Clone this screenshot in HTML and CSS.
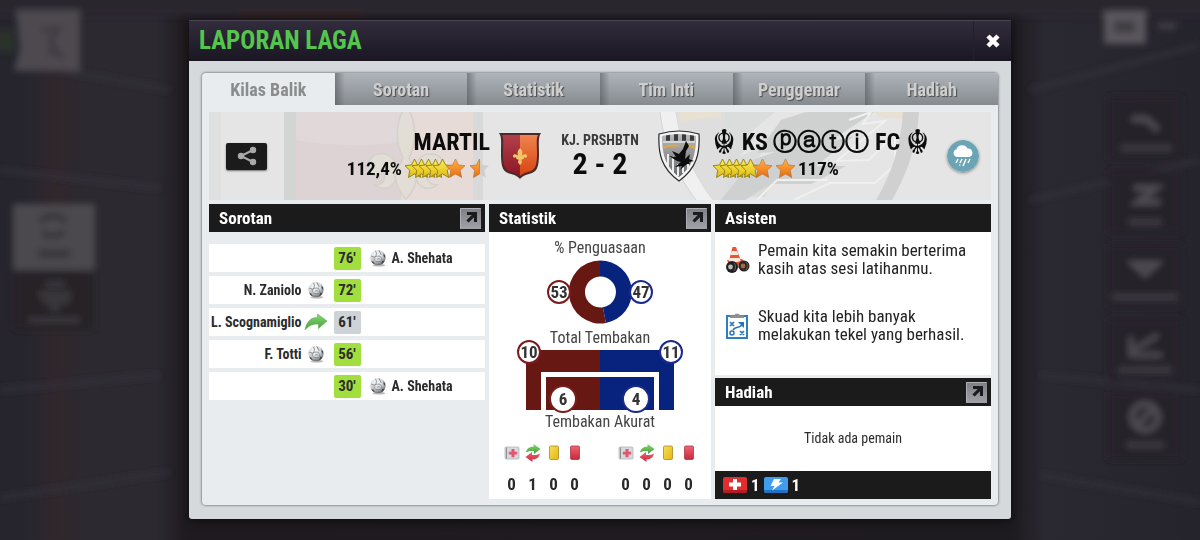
FILE: index.html
```html
<!DOCTYPE html>
<html lang="id">
<head>
  <meta charset="UTF-8" />
  <title>Laporan Laga</title>
  <meta name="viewport" content="width=device-width, initial-scale=1.0" />
  <link rel="stylesheet" href="styles.css">
</head>
<body>
  <!-- Blurred club screen behind the dialog -->
  <svg class="backdrop" viewBox="0 0 1200 540" preserveAspectRatio="none" aria-hidden="true">
    <defs>
      <filter id="soft" x="-20%" y="-20%" width="140%" height="140%"><feGaussianBlur stdDeviation="3"/></filter>
      <linearGradient id="field">
        <stop offset="0" stop-color="#26252e"/><stop offset=".02" stop-color="#26252e"/><stop offset=".045" stop-color="#30272c"/>
        <stop offset=".07" stop-color="#2c2930"/><stop offset=".13" stop-color="#2c2930"/><stop offset=".155" stop-color="#1f1a1f"/>
        <stop offset=".845" stop-color="#1e1b20"/><stop offset=".87" stop-color="#2a2830"/><stop offset="1" stop-color="#25232c"/>
      </linearGradient>
    </defs>
    <rect width="1200" height="540" fill="url(#field)"/>
    <g filter="url(#soft)">
      <rect x="-20" y="-20" width="1240" height="36" fill="#2a272e"/>
      <path d="M240 14h120" stroke="#3a2028" stroke-width="4"/>
      <path d="M60 70 170 90M0 170 160 188M0 390 160 375M0 498 170 472M1030 90 1200 45M1030 200 1200 160M1040 375 1200 390M1040 475 1200 502" stroke="#33303a" stroke-width="4"/>
      <rect x="-4" y="30" width="18" height="22" fill="#29322c"/>
      <path d="M16 10h64v61H14l6-22z" fill="#4d4950"/>
      <path d="M42 30l16-1-8 12 9 14-12-4" stroke="#403c43" stroke-width="6" fill="none"/>
      <rect x="13" y="204" width="82" height="66" fill="#4b484e"/>
      <path d="M40 222c6-8 20-8 26 0M42 232c6 6 17 5 22-1" fill="none" stroke="#38353b" stroke-width="6"/>
      <rect x="38" y="249" width="32" height="9" fill="#3b383d"/>
      <rect x="14" y="272" width="80" height="58" fill="#252228"/>
      <path d="M45 284h20M38 294h34M42 301h28M50 308h10M28 320h52" stroke="#3d3a40" stroke-width="5"/>
      <rect x="1104" y="11" width="42" height="33" fill="#5a575d"/>
      <path d="M1114 21h21v12h-21z" fill="#3f3c43"/>
      <path d="M1158 26h18" stroke="#434048" stroke-width="6"/>
      <g fill="#262329">
        <rect x="1108" y="96" width="74" height="64"/><rect x="1108" y="170" width="74" height="64"/>
        <rect x="1108" y="244" width="74" height="64"/><rect x="1108" y="318" width="74" height="64"/>
        <rect x="1108" y="392" width="74" height="68"/>
      </g>
      <g stroke="#4f4c53" stroke-width="6" fill="none">
        <path d="M1132 119h14l12 11"/>
        <path d="M1134 188h22l-18 14h22"/>
        <path d="M1134 264h22l-11 10z"/>
        <path d="M1131 337v18h31M1134 350l24-15" stroke-width="5"/>
        <circle cx="1145" cy="417" r="13"/><path d="M1138 424l14-14"/>
      </g>
      <path d="M1120 148h52M1128 222h34M1112 297h66M1118 370h54M1126 445h38" stroke="#3b383f" stroke-width="7"/>
    </g>
  </svg>

  <!-- Shared symbols -->
  <svg class="defs" aria-hidden="true">
    <defs>
      <linearGradient id="gYellow" x1="0" y1="0" x2="0" y2="1"><stop offset="0" stop-color="#fff05a"/><stop offset="1" stop-color="#dcb912"/></linearGradient>
      <linearGradient id="gOrange" x1="0" y1="0" x2="0" y2="1"><stop offset="0" stop-color="#ffb54c"/><stop offset="1" stop-color="#e96a0c"/></linearGradient>
      <linearGradient id="gGreen" x1="0" y1="0" x2="0" y2="1"><stop offset="0" stop-color="#8bd676"/><stop offset="1" stop-color="#3f9f37"/></linearGradient>
      <linearGradient id="gRed" x1="0" y1="0" x2="0" y2="1"><stop offset="0" stop-color="#f06472"/><stop offset="1" stop-color="#c8283c"/></linearGradient>
      <linearGradient id="gCardY" x1="0" y1="0" x2="1" y2="1"><stop offset="0" stop-color="#f7df5a"/><stop offset="1" stop-color="#e6b80c"/></linearGradient>
      <radialGradient id="gBall" cx=".4" cy=".3" r=".7"><stop offset="0" stop-color="#fff"/><stop offset=".6" stop-color="#d0d4d7"/><stop offset="1" stop-color="#6a6e72"/></radialGradient>
      <linearGradient id="gBox" x1="0" y1="0" x2="0" y2="1"><stop offset="0" stop-color="#7d7f85"/><stop offset="1" stop-color="#a0a2a8"/></linearGradient>

      <path id="starShape" d="M9.500 0l3 6 6.500.7-4.800 4.600 1.500 7.200-6.200-3.600-6 3.600 1.200-7.200L0 6.700 6.500 6z"/>
      <g id="starY"><use href="#starShape" fill="url(#gYellow)" stroke="#8f7a12" stroke-width=".9"/></g>
      <g id="starO"><use href="#starShape" fill="url(#gOrange)" stroke="#b8743c" stroke-width=".7"/></g>

      <symbol id="open" viewBox="0 0 21 21">
        <rect width="21" height="21" fill="url(#gBox)"/>
        <path d="M.5 20.500V.5h20" fill="none" stroke="#aeb0b5"/>
        <path d="M7 4h10v10h-3V9.200L8.600 14.600 6.400 12.400 11.800 7H7z" fill="#1b1b1d"/>
      </symbol>

      <symbol id="ball" viewBox="0 0 20 20">
        <ellipse cx="11" cy="18" rx="7" ry="1.500" fill="#8a8a8a" opacity=".6"/>
        <circle cx="10" cy="9.500" r="8.500" fill="url(#gBall)"/>
        <path d="M7 2c2 2 1.500 5-.5 7M11 1.500l2.500 5M2.500 8l3.500 1M6 9.500c3-2.500 7-2 8 .8s-2 4.500-5 3.700-4-2.500-3-4.500M9 11.500c1-1.200 3-1 3.500.2" fill="none" stroke="#777b80" stroke-width=".9"/>
        <path d="M14.500 13l2.800.3c-.8 1.700-2 2.900-3.600 3.800zM2.500 13.500l2.300.5 1.500 3C4.500 16.300 3.300 15 2.500 13.500zM16 5l1.700 2 .3 3-1.800-2z" fill="#44484c"/>
      </symbol>

      <symbol id="arrow" viewBox="0 0 24 18">
        <path d="M1 17C3 7 8 4.500 13.500 4.500V1L23 8l-8.500 7.500v-4.300C9 10.500 5 12.500 1 17z" fill="url(#gGreen)" stroke="#5cae50" stroke-width=".6"/>
      </symbol>

      <symbol id="injury" viewBox="0 0 16 16">
        <rect x="1" y="2" width="14" height="12" rx="1" fill="#d7d9dd" stroke="#a9acb2" stroke-width=".7"/>
        <path d="M2.500 2.500v11" stroke="#8b8e94"/>
        <path d="M7.500 4h3v2.700h2.700v2.800h-2.700v2.700h-3V9.500H4.800V6.700h2.700z" fill="#de5870"/>
      </symbol>
      <symbol id="swap" viewBox="0 0 16 18">
        <path d="M1 8.500C2 4 5 2.500 8.500 2.700V0L15.500 5l-6.500 5V7C6 6.800 3.500 7 1 8.500z" fill="url(#gGreen)"/>
        <path d="M15 9.500c-1 4.500-4 6-7.500 5.800V18L.5 13l6.500-5v3c3 .2 5.500 0 8-1.500z" fill="url(#gRed)"/>
      </symbol>
      <symbol id="yellow" viewBox="0 0 16 16"><rect x="3.500" y="1" width="9" height="13.500" rx="1.200" fill="url(#gCardY)" stroke="#a48a2a" stroke-width=".8"/></symbol>
      <symbol id="red" viewBox="0 0 16 16"><rect x="3.500" y="1" width="9" height="13.500" rx="1.200" fill="url(#gRed)" stroke="#a83a48" stroke-width=".8"/></symbol>
    </defs>
  </svg>

  <main class="dialog">
    <header class="dialog-head">
      <h1>LAPORAN LAGA</h1>
      <button class="close" aria-label="Tutup">
        <svg viewBox="0 0 16 16" width="16" height="16"><path d="M3 3l10 10M13 3L3 13" stroke="#fff" stroke-width="4.500"/></svg>
      </button>
    </header>

    <div class="dialog-body">
      <div class="sheet">
        <nav class="tabs" role="tablist">
          <button class="tab active" role="tab" aria-selected="true">Kilas Balik</button>
          <button class="tab" role="tab">Sorotan</button>
          <button class="tab" role="tab">Statistik</button>
          <button class="tab" role="tab">Tim Inti</button>
          <button class="tab" role="tab">Penggemar</button>
          <button class="tab" role="tab">Hadiah</button>
        </nav>

        <div class="content">
          <section class="banner">
            <svg class="watermark" viewBox="0 0 782 88" preserveAspectRatio="xMidYMid slice" aria-hidden="true">
              <rect width="782" height="88" fill="#e5e5e5"/>
              <rect width="12" height="88" fill="#dfe0e0"/>
              <rect x="75" width="14" height="88" fill="#d3d4d4"/>
              <rect x="87" width="105" height="88" fill="#e0d8d9"/>
              <path d="M87 28c35 6 70 7 105 2v58H87z" fill="#ddd3d4"/>
              <rect x="192" width="72" height="88" fill="#e6dbd7"/>
              <rect x="264" width="10" height="88" fill="#d8d9d9"/>
              <g fill="#e2ded6" stroke="#d4d0ca" stroke-width="1.500">
                <path d="M187 52c-8-18-32-10-27 6 3 8 12 6 14 1 5 10-2 14-8 14 8 6 17 4 21-6zM207 52c8-18 32-10 27 6-3 8-12 6-14 1-5 10 2 14 8 14-8 6-17 4-21-6z"/>
                <path d="M197-6c-12 16-10 38-3 52l-8 16c0 8 5 20 11 25 6-5 11-17 11-25l-8-16c7-14 9-36-3-52z"/>
              </g>
              <path d="M451 0c4 36 18 64 36 88h17C486 64 472 36 467 0z" fill="#f0f0f0"/>
              <path d="M451 0c4 36 18 64 36 88M467 0c5 36 19 64 37 88" fill="none" stroke="#d3d3d3"/>
              <path d="M467 0h49v88h-12C486 64 472 36 467 0z" fill="#dedede"/>
              <path d="M470 0h42v5l-41 5zM665 0h30l-2 7-22-2z" fill="#e8e0d2"/>
              <path d="M516 0h50l-30 25 12-2-18 22 26-12-10 22 30-10-20 40h-40z" fill="#dbdcdc"/>
              <path d="M572 8l25-8h68l-45 30 25-6-38 30 30 0-35 18h-40l-26 16h-24l32-40 22-8-18 1z" fill="#cfd0d0"/>
              <path d="M640 8l22-8-8 12 22-3-48 40 32-1 26-26v31l-20 18h-45l-36 17M548 88l20-20 50 0" fill="none" stroke="#f0f0ee" stroke-width="2"/>
              <path d="M694 0h16c-2 34-12 62-27 88h-16c15-25 25-54 27-88z" fill="#d0d0d0"/>
            </svg>

            <div class="side home">
              <button class="share" aria-label="Bagikan">
                <svg viewBox="0 0 20 20" width="20" height="20"><path d="M16 4L4 10l12 6" fill="none" stroke="#a9a9a9" stroke-width="2"/><g fill="#a9a9a9"><circle cx="16" cy="4" r="3.200"/><circle cx="4" cy="10" r="3.200"/><circle cx="16" cy="16" r="3.200"/></g></svg>
              </button>
              <div class="team">
                <h2>MARTIL</h2>
                <p class="rating">112,4%
                  <svg width="86" height="20" viewBox="0 0 86 20">
                    <use href="#starY" x="1" y="1"/><use href="#starY" x="8" y="1"/><use href="#starY" x="15" y="1"/><use href="#starY" x="22" y="1"/><use href="#starY" x="29" y="1"/><use href="#starO" x="42" y="1"/>
                    <g transform="translate(66 1)"><use href="#starShape" fill="#d0cdca"/><path d="M9.500 0v14.900l-6 3.600 1.200-7.200L0 6.700 6.500 6z" fill="url(#gOrange)" stroke="#b8743c" stroke-width=".7"/></g>
                  </svg>
                </p>
              </div>
              <svg class="crest" viewBox="0 0 44 48" width="44" height="48">
                <defs>
                  <linearGradient id="cL" x1="0" y1="0" x2="0" y2="1"><stop offset="0" stop-color="#b2404a"/><stop offset="1" stop-color="#8c1626"/></linearGradient>
                  <linearGradient id="cR" x1="0" y1="0" x2="0" y2="1"><stop offset="0" stop-color="#f08350"/><stop offset="1" stop-color="#d6430e"/></linearGradient>
                </defs>
                <path d="M1 1h42c-3 4-2 11-2 20 0 15-2 19-10 21-5 1-7 3-9 5-2-2-4-4-9-5C5 40 3 36 3 21 3 12 4 5 1 1z" fill="#4c2a2c"/>
                <path d="M4 3h18v41c-2-2-4-3-8-4-7-2-9-5-9-19 0-9 1-14-1-18z" fill="url(#cL)"/>
                <path d="M40 3H22v41c2-2 4-3 8-4 7-2 9-5 9-19 0-9-1-14 1-18z" fill="url(#cR)"/>
                <path d="M22 16c-3 3-3 6-1 9-1-3-6-4-6-1 0 2 2 2 3 1 0 3 2 2 3 3l-1 1c0 2 1 3 2 4 1-1 2-2 2-4l-1-1c1-1 3 0 3-3 1 1 3 1 3-1 0-3-5-2-6 1 2-3 2-6-1-9z" fill="#f1c76a"/>
              </svg>
            </div>

            <div class="score">
              <span class="competition">KJ. PRSHBTN</span>
              <strong>2 - 2</strong>
            </div>

            <div class="side away">
              <svg class="crest" viewBox="0 0 42 52" width="42" height="52">
                <defs><linearGradient id="cA" x1="0" y1="0" x2="0" y2="1"><stop offset="0" stop-color="#b9bbbd"/><stop offset="1" stop-color="#686a6c"/></linearGradient></defs>
                <path d="M21 1c7 0 13 1 20 3 1 19-2 34-20 47C3 38 0 23 1 4c7-2 13-3 20-3z" fill="#f4f4f4" stroke="#2b2b2b" stroke-width="1.200"/>
                <path d="M21 4c6 0 12 1 17 2 0 18-3 30-17 41C7 36 4 24 4 6c5-1 11-2 17-2z" fill="url(#cA)"/>
                <path d="M8 5.500l4-.8v6H8zM16 4.200h4v6.500h-4zM24 4.200l4 .3v6.200h-4zM32 5l4 .7v5h-4z" fill="#3a3b3c"/>
                <path d="M5 12h32" stroke="#fff"/>
                <path d="M5 18c6-3 11-3 15-2M25 15c5 0 8 1 12 3" stroke="#e6a83c" stroke-width="2" fill="none"/>
                <path d="M10 24v12M15 26v16M20 34v12M25 34v9M30 30v9" stroke="#ececec" stroke-width="2"/>
                <path d="M28 11l-3 8-4 5-7-3 4 6-7-1 8 5 4 1-6 5 7-1-2 4 7-6 3 0-1-2 5-1-5-2 1-5-5 5 1-8 3-5z" fill="#0d0d0d"/>
              </svg>
              <div class="team">
                <h2><span class="emblem">☬</span> KS ⓟⓐⓣⓘ FC <span class="emblem">☬</span></h2>
                <p class="rating">
                  <svg width="84" height="20" viewBox="0 0 84 20">
                    <use href="#starY" x="1" y="1"/><use href="#starY" x="8" y="1"/><use href="#starY" x="15" y="1"/><use href="#starY" x="22" y="1"/><use href="#starY" x="29" y="1"/><use href="#starO" x="41" y="1"/><use href="#starO" x="64" y="1"/>
                  </svg>
                  117%</p>
              </div>
              <svg class="weather" viewBox="0 0 32 32" width="32" height="32">
                <circle cx="16" cy="16" r="16" fill="#6ba4b5"/>
                <path d="M10 17a4 4 0 0 1-.5-7.800A6 6 0 0 1 20.500 8.500 4.400 4.400 0 0 1 22.500 17z" fill="#fff"/>
                <path d="M11 19l-2 4M15 19l-2 4M19 19l-3 7M23 19l-2 4M13 24.500l-.5 1" stroke="#fff" stroke-width="1.500"/>
              </svg>
            </div>
          </section>

          <div class="columns">
            <section class="panel">
              <header class="panel-head"><h3>Sorotan</h3><button aria-label="Buka sorotan"><svg width="21" height="21"><use href="#open"/></svg></button></header>
              <ul class="events">
                <li><span></span><time class="goal">76'</time><span class="right"><svg class="ico"><use href="#ball"/></svg>A. Shehata</span></li>
                <li><span class="left">N. Zaniolo<svg class="ico"><use href="#ball"/></svg></span><time class="goal">72'</time><span></span></li>
                <li><span class="left">L. Scognamiglio<svg class="ico"><use href="#arrow"/></svg></span><time>61'</time><span></span></li>
                <li><span class="left">F. Totti<svg class="ico"><use href="#ball"/></svg></span><time class="goal">56'</time><span></span></li>
                <li><span></span><time class="goal">30'</time><span class="right"><svg class="ico"><use href="#ball"/></svg>A. Shehata</span></li>
              </ul>
            </section>

            <section class="panel white">
              <header class="panel-head"><h3>Statistik</h3><button aria-label="Buka statistik"><svg width="21" height="21"><use href="#open"/></svg></button></header>
              <div class="stats">
                <h4>% Penguasaan</h4>
                <svg class="chart" width="110" height="64" viewBox="0 0 110 64">
                  <path d="M55 0.500A31.500 31.500 0 1 0 60.900 63L57.900 47.300A15.500 15.500 0 1 1 55 16.500z" fill="#681812"/>
                  <path d="M55 .5A31.500 31.500 0 0 1 60.900 63L57.900 47.300A15.500 15.500 0 0 0 55 16.500z" fill="#08237e"/>
                  <circle class="home-ring" cx="14" cy="32" r="11"/><text x="14" y="38">53</text>
                  <circle class="away-ring" cx="96" cy="32" r="11"/><text x="96" y="38">47</text>
                </svg>
                <h4>Total Tembakan</h4>
                <svg class="chart goalmouth" width="168" height="76" viewBox="0 0 168 76">
                  <path d="M10 12h74v60H10z" fill="#681812"/><path d="M84 12h74v60H84z" fill="#08237e"/>
                  <path d="M27.500 72V36.500h113V72" fill="none" stroke="#fff" stroke-width="5"/>
                  <circle class="home-ring" cx="13" cy="14" r="11"/><text x="13" y="20">10</text>
                  <circle class="away-ring" cx="155" cy="14" r="11"/><text x="155" y="20">11</text>
                  <circle class="home-ring" cx="47" cy="61" r="13"/><text x="47" y="67">6</text>
                  <circle class="away-ring" cx="120" cy="61" r="13"/><text x="120" y="67">4</text>
                </svg>
                <h4>Tembakan Akurat</h4>
                <div class="cards">
                  <table>
                    <tr><th><svg aria-label="Cedera"><use href="#injury"/></svg></th><th><svg aria-label="Pergantian"><use href="#swap"/></svg></th><th><svg aria-label="Kartu kuning"><use href="#yellow"/></svg></th><th><svg aria-label="Kartu merah"><use href="#red"/></svg></th></tr>
                    <tr><td>0</td><td>1</td><td>0</td><td>0</td></tr>
                  </table>
                  <table>
                    <tr><th><svg aria-label="Cedera"><use href="#injury"/></svg></th><th><svg aria-label="Pergantian"><use href="#swap"/></svg></th><th><svg aria-label="Kartu kuning"><use href="#yellow"/></svg></th><th><svg aria-label="Kartu merah"><use href="#red"/></svg></th></tr>
                    <tr><td>0</td><td>0</td><td>0</td><td>0</td></tr>
                  </table>
                </div>
              </div>
            </section>

            <div class="stack">
              <section class="panel white assistant">
                <header class="panel-head"><h3>Asisten</h3></header>
                <div class="tip">
                  <svg width="26" height="28" viewBox="0 0 26 28">
                    <path d="M3 14l15-1 4 4-16 4z" fill="#e4502c"/>
                    <path d="M8.500 1h3.500l5 14-6 2-6-2z" fill="#e9552f"/>
                    <path d="M7.700 5h5.500l1.300 4H6.500zM5.600 12h10l1 3-6 1.500-6-1.500z" fill="#f6e7e0"/>
                    <path d="M7 21l14-1" stroke="#aaa" stroke-width="3"/>
                    <circle cx="8" cy="21" r="6" fill="#202020"/><circle cx="20" cy="20" r="5.500" fill="#2c2624"/>
                    <circle cx="6.500" cy="21" r="2.400" fill="#b9bcbd"/><circle cx="19" cy="20" r="2.400" fill="#a5664e"/>
                    <path d="M10 17c2 2 2 6 0 8M22 16c2 2 2 5 0 8" stroke="#666" fill="none"/>
                  </svg>
                  <p>Pemain kita semakin berterima kasih atas sesi latihanmu.</p>
                </div>
                <div class="tip">
                  <svg width="26" height="28" viewBox="0 0 26 28">
                    <rect x="3" y="4" width="20" height="22" fill="#fff" stroke="#2d7fc4" stroke-width="2"/>
                    <path d="M6 6V3.500h4C10.500 1 15.500 1 16 3.500h4V6z" fill="#8d8f91"/>
                    <path d="M6 10l4 4M10 10l-4 4M16 19l4 4M20 19l-4 4M9 18c2-4 5-1 9-5" stroke="#2575bd" stroke-width="1.700" fill="none"/>
                    <path d="M14 10h6v6z" fill="#2575bd"/><circle cx="8" cy="21" r="2" fill="none" stroke="#2575bd" stroke-width="1.500"/>
                  </svg>
                  <p>Skuad kita lebih banyak melakukan tekel yang berhasil.</p>
                </div>
              </section>
              <section class="panel white prize">
                <header class="panel-head"><h3>Hadiah</h3><button aria-label="Buka hadiah"><svg width="21" height="21"><use href="#open"/></svg></button></header>
                <p class="empty">Tidak ada pemain</p>
                <footer class="gains">
                  <svg width="24" height="16" viewBox="0 0 24 16"><rect width="24" height="16" rx="2" fill="#e02e30"/><path d="M0 13h24v1.500L22 16H2l-2-1.500z" fill="#b41c22"/><path d="M10 2h4v3.500h4v4h-4V13h-4V9.500H6v-4h4z" fill="#fff"/></svg>
                  <span>1</span>
                  <svg width="24" height="16" viewBox="0 0 24 16"><rect width="24" height="16" rx="2" fill="#3f9df0"/><path d="M0 13h24v1.500L22 16H2l-2-1.500z" fill="#2272c4"/><path d="M10 2h7l-2.500 3.500H19L8 13.500 10.500 9H6.500z" fill="#fff"/></svg>
                  <span>1</span>
                </footer>
              </section>
            </div>
          </div>
        </div>
      </div>
    </div>
  </main>
</body>
</html>
```
FILE: styles.css
```css
* {
  box-sizing: border-box;
}

body {
  font-family: 'Roboto Condensed', 'Liberation Sans', 'DejaVu Sans', sans-serif;
  background: #29262e;
  margin: 0;
  padding: 20px 0;
  min-height: 100vh;
  color: #2b2b2b;
}

h1, h2, h3, h4, p, ul, table {
  margin: 0;
  padding: 0;
}

button {
  font-family: inherit;
  border: none;
  padding: 0;
  background: none;
  cursor: pointer;
}

svg {
  display: block;
  flex: none;
}

.backdrop {
  position: fixed;
  inset: 0;
  width: 100%;
  height: 100%;
  z-index: -1;
}

.defs {
  position: absolute;
  width: 0;
  height: 0;
}

.dialog {
  width: 68.5%;
  margin: 0 auto;
  border-radius: 3px;
  background: #d5d9dc;
  box-shadow: 0 2px 10px rgba(0, 0, 0, 0.6);
}

.dialog-head {
  display: flex;
  justify-content: space-between;
  height: 41px;
  padding-left: 10px;
  border-top: 1px solid #4a4552;
  background: linear-gradient(#322c3c, #1a1622);
}

.dialog-head h1 {
  font-size: 25px;
  line-height: 40px;
  color: #54c64e;
}

.close {
  width: 38px;
  padding-left: 11px;
  border-left: 1px solid #241f2c;
}

.dialog-body {
  padding: 12px 13px 14px;
}

.sheet {
  border-radius: 4px;
  background: #e8ecee;
  box-shadow: 0 0 2px 1px #8f9498;
}

.tabs {
  display: grid;
  grid-template-columns: repeat(6, 1fr);
}

.tab {
  height: 32px;
  font-size: 18px;
  font-weight: bold;
  color: #cfcfcf;
  text-shadow: 1px 1px 1px #4c4c4c;
  background: linear-gradient(to right, rgba(70, 75, 80, 0.5), transparent 10px), linear-gradient(#afb4ba, #868b90);
}

.tab:last-child {
  border-top-right-radius: 4px;
}

.tab.active {
  color: #8b8c8d;
  text-shadow: none;
  background: none;
}

.content {
  padding: 7px 7px 6px;
}

.banner {
  position: relative;
  display: grid;
  grid-template-columns: minmax(0, 1fr) 116px minmax(0, 1fr);
  align-items: center;
  height: 88px;
  margin-bottom: 4px;
  color: #0c0c0c;
}

.watermark {
  position: absolute;
  inset: 0;
  width: 100%;
  height: 100%;
}

.side, .score {
  position: relative;
  display: flex;
  align-items: center;
}

.home {
  gap: 8px;
  padding-left: 17px;
}

.away {
  gap: 12px;
  padding-right: 12px;
}

.share {
  display: grid;
  place-items: center;
  width: 41px;
  height: 27px;
  border-radius: 2px;
  background: #1b1b1b;
  box-shadow: 0 1px 2px rgba(0, 0, 0, 0.5);
}

.home .team {
  margin-left: auto;
  text-align: right;
}

.team h2 {
  font-size: 24px;
  line-height: 28px;
  white-space: nowrap;
}

.emblem {
  font-size: 34px;
  font-weight: normal;
  line-height: 0;
  vertical-align: -4px;
}

.rating {
  display: flex;
  align-items: center;
  gap: 2px;
  padding-bottom: 4px;
  font-size: 19px;
  font-weight: bold;
  line-height: 25px;
}

.weather {
  margin-left: auto;
  border-radius: 50%;
  box-shadow: 0 1px 3px rgba(0, 0, 0, 0.4);
}

.score {
  flex-direction: column;
}

.competition {
  font-size: 14px;
  font-weight: bold;
  line-height: 16px;
  color: #3a3a3a;
}

.score strong {
  font-size: 30px;
  line-height: 32px;
}

.columns {
  display: grid;
  grid-template-columns: 276fr 222fr 276fr;
  gap: 4px;
}

.stack {
  display: flex;
  flex-direction: column;
  gap: 3px;
}

.white {
  background: #fff;
}

.panel-head {
  display: flex;
  align-items: center;
  justify-content: space-between;
  height: 28px;
  padding: 0 4px 0 10px;
  background: #1b1b1b;
}

.panel-head h3 {
  font-size: 17px;
  line-height: 28px;
  color: #fff;
}

.events {
  display: grid;
  gap: 4px;
  padding-top: 12px;
  list-style: none;
}

.events li {
  display: grid;
  grid-template-columns: minmax(0, 1fr) 27px minmax(0, 1fr);
  align-items: center;
  height: 28px;
  background: #fff;
  font-size: 14px;
  font-weight: bold;
  white-space: nowrap;
}

.events time {
  border-radius: 2px;
  background: #cdd3d6;
  font-size: 15px;
  line-height: 23px;
  text-align: center;
}

.events time.goal {
  background: #a0df3e;
}

.left, .right {
  display: flex;
  align-items: center;
  gap: 2px;
}

.left {
  justify-content: flex-end;
  padding-right: 6px;
}

.right {
  padding-left: 5px;
}

.ico {
  width: 24px;
  height: 18px;
}

.stats {
  display: flex;
  flex-direction: column;
  align-items: center;
  padding-top: 6px;
}

.stats h4 {
  font-size: 16px;
  font-weight: normal;
  line-height: 20px;
  color: #444;
}

.chart {
  margin: 2px 0 4px;
}

.goalmouth {
  margin: -10px 0 -2px;
}

.chart circle {
  fill: #fff;
  stroke-width: 2;
}

.home-ring {
  stroke: #7b1c1c;
}

.away-ring {
  stroke: #1a2a8c;
}

.chart text {
  font-size: 17px;
  font-weight: bold;
  text-anchor: middle;
  fill: #333;
}

.cards {
  display: flex;
  justify-content: space-between;
  align-self: stretch;
  padding: 7px 12px 0;
}

.cards table {
  border-collapse: collapse;
}

.cards th, .cards td {
  width: 21px;
  padding: 0;
  text-align: center;
  font-size: 17px;
  font-weight: bold;
  line-height: 30px;
}

.cards th svg {
  width: 16px;
  height: 18px;
  margin: 5px auto 7px;
}

.assistant {
  flex: 1;
}

.tip {
  display: flex;
  gap: 8px;
  height: 66px;
  padding: 9px 10px 0 9px;
}

.tip svg {
  margin-top: 5px;
}

.tip p {
  font-size: 17px;
  line-height: 18px;
  color: #222;
}

.empty {
  font-size: 14px;
  line-height: 65px;
  text-align: center;
}

.gains {
  display: flex;
  align-items: center;
  gap: 4px;
  height: 28px;
  padding-left: 8px;
  background: #1b1b1b;
  color: #fff;
  font-size: 17px;
  font-weight: bold;
}

@media (max-width: 1000px) {
  .dialog { width: 96%; }
}
```
